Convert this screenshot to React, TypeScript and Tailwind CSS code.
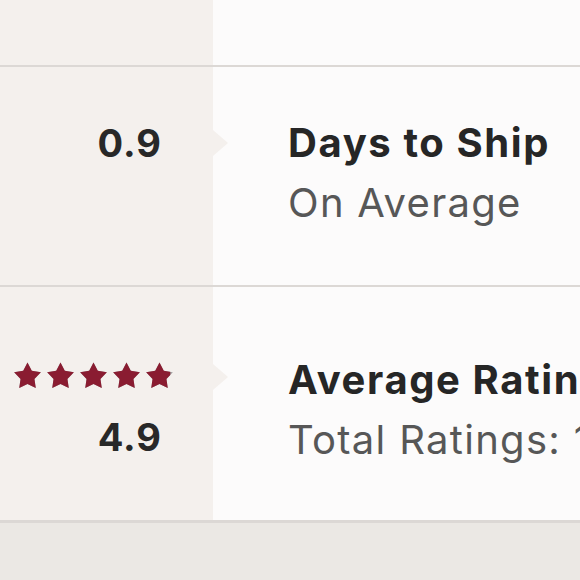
import React from 'react';

const font = { fontFamily: 'Inter, "Open Sans", sans-serif' };

/** Five-star row; the last star is only partly filled. */
function Stars({ rating }: { rating: number }): React.JSX.Element {
  const d =
    'M12 .5L15.82 7.74 23.89 9.14 18.18 15.01 19.35 23.11 12 19.5 4.65 23.11 5.82 15.01 .11 9.14 8.18 7.74z';
  return (
    <div className="flex gap-[6px]">
      {[0, 1, 2, 3, 4].map((i) => {
        const fill = Math.max(0, Math.min(1, rating - i));
        return (
          <svg key={i} width="27" height="27" viewBox="0 0 24 24">
            <defs>
              <clipPath id={`c${i}`}>
                <rect x="0" y="0" width={24 * fill} height="24" />
              </clipPath>
            </defs>
            <path d={d} fill="#a3a3a3" />
            <path d={d} fill="#8a1c31" clipPath={`url(#c${i})`} />
          </svg>
        );
      })}
    </div>
  );
}

function Arrow({ top }: { top: number }): React.JSX.Element {
  return (
    <div
      className="absolute left-full h-0 w-0 border-y-[13px] border-l-[15px] border-y-transparent border-l-[#f4f0ed]"
      style={{ top }}
    />
  );
}

export default function App(): React.JSX.Element {
  return (
    <div className="h-[580px] w-[580px] overflow-hidden bg-[#ebe8e4]" style={font}>
      {/* partial row above */}
      <div className="flex h-[67px] border-b-2 border-[#dcd8d5]">
        <div className="w-[213px] bg-[#f4f0ed]" />
        <div className="flex-1 bg-[#fcfbfb]" />
      </div>

      {/* days to ship */}
      <div className="flex h-[220px] border-b-2 border-[#dcd8d5]">
        <div className="relative z-10 flex w-[213px] flex-col items-end bg-[#f4f0ed] pr-[51px] pt-[56px]">
          <span className="text-[38px] font-bold leading-[40px] tracking-[1px] text-[#282828]">0.9</span>
          <Arrow top={63} />
        </div>
        <div className="flex-1 overflow-hidden whitespace-nowrap bg-[#fcfbfb] pl-[75px] pt-[56px]">
          <div className="text-[40px] font-bold leading-[40px] tracking-[1.6px] text-[#262626]">Days to Ship</div>
          <div className="mt-[20px] text-[40px] leading-[40px] tracking-[1.3px] text-[#575757]">On Average</div>
        </div>
      </div>

      {/* rating */}
      <div className="flex h-[236px] border-b-[3px] border-[#dcd8d5]">
        <div className="relative z-10 flex w-[213px] flex-col items-end bg-[#f4f0ed] pr-[40px] pt-[75px]">
          <Stars rating={4.9} />
          <span className="mr-[11px] mt-[28px] text-[38px] font-bold leading-[40px] tracking-[1px] text-[#282828]">
            4.9
          </span>
          <Arrow top={77} />
        </div>
        <div className="flex-1 overflow-hidden whitespace-nowrap bg-[#fcfbfb] pl-[75px] pt-[73px]">
          <div className="text-[40px] font-bold leading-[40px] tracking-[1.6px] text-[#262626]">Average Rating</div>
          <div className="mt-[20px] text-[40px] leading-[40px] tracking-[1.3px] text-[#575757]">
            Total Ratings: 1,482
          </div>
        </div>
      </div>
    </div>
  );
}
